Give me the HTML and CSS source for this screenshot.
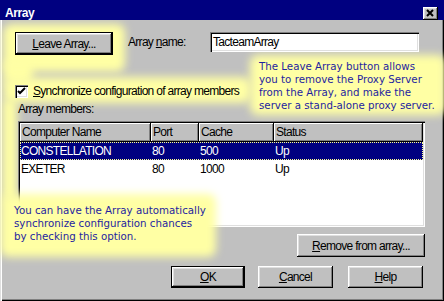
FILE: index.html
```html
<!DOCTYPE html>
<html>
<head>
<meta charset="utf-8">
<title>Array</title>
<link rel="stylesheet" href="styles.css">
</head>
<body>
<div class="window">
  <div class="glow g1"></div>
  <div class="glow g1b"></div>
  <div class="glow g2"></div>
  <div class="glow g4"></div>
  <div class="glow g6"></div>

  <div class="titlebar">
    <span class="title">Array</span>
    <span class="close"><svg width="15" height="13" viewBox="0 0 15 13"><path d="M4 3 L10 9 M10 3 L4 9" stroke="#000" stroke-width="2" fill="none"/></svg></span>
  </div>

  <div class="body">
    <div class="row1">
      <button class="btn default leave"><u>L</u>eave Array...</button>
      <span class="name-label">Array <u>n</u>ame:</span>
      <div class="input">TacteamArray</div>
    </div>

    <div class="check-row">
      <span class="checkbox"><svg width="9" height="9" viewBox="0 0 9 9"><path d="M1 4 L3 6 L8 1" stroke="#000" stroke-width="2" fill="none"/></svg></span>
      <span class="check-label"><u>S</u>ynchronize configuration of array members</span>
    </div>

    <div class="members-label">Array members:</div>

    <div class="list">
      <div class="lrow header">
        <div class="cell c1">Computer Name</div>
        <div class="cell c2">Port</div>
        <div class="cell c3">Cache</div>
        <div class="cell c4">Status</div>
      </div>
      <div class="lrow item selected">
        <div class="cell c1">CONSTELLATION</div>
        <div class="cell c2">80</div>
        <div class="cell c3">500</div>
        <div class="cell c4">Up</div>
      </div>
      <div class="lrow item">
        <div class="cell c1">EXETER</div>
        <div class="cell c2">80</div>
        <div class="cell c3">1000</div>
        <div class="cell c4">Up</div>
      </div>
    </div>

    <div class="remove-row">
      <button class="btn remove"><u>R</u>emove from array...</button>
    </div>

    <div class="btn-row">
      <button class="btn default ok"><u>O</u>K</button>
      <button class="btn cancel"><u>C</u>ancel</button>
      <button class="btn help"><u>H</u>elp</button>
    </div>
  </div>

  <div class="callout c-top">The Leave Array button allows<br>you to remove the Proxy Server<br>from the Array, and make the<br>server a stand-alone proxy server.</div>

  <div class="glow g5"></div>
  <div class="callout c-bottom">You can have the Array automatically<br>synchronize configuration chances<br>by checking this option.</div>
</div>
</body>
</html>
```

FILE: styles.css
```css
html, body {
  margin: 0;
  padding: 0;
  background: #c0c0c0;
}

.window {
  position: relative;
  width: 444px;
  height: 301px;
  box-sizing: border-box;
  background: #c0c0c0;
  box-shadow: inset 1px 1px #dfdfdf, inset 2px 2px #fff, inset -1px -1px #000, inset -2px -2px #808080;
  overflow: hidden;
  font-family: "Liberation Sans", Arial, sans-serif;
  font-size: 12px;
  letter-spacing: -0.7px;
  color: #000;
}

.titlebar {
  position: relative;
  z-index: 1;
  height: 20px;
  box-sizing: border-box;
  padding: 5px 6px 0 5px;
  background: #000080;
  color: #fff;
  display: flex;
  align-items: center;
  justify-content: space-between;
}

.title {
  font-weight: bold;
  font-size: 12px;
  letter-spacing: -0.4px;
}

.close {
  width: 15px;
  height: 13px;
  margin-top: 1px;
  background: #c0c0c0;
  box-shadow: inset -1px -1px #000, inset 1px 1px #fff, inset -2px -2px #808080, inset 2px 2px #dfdfdf;
  display: flex;
}

.body {
  position: relative;
  z-index: 1;
  padding: 12px 19px 0 15px;
}

.btn {
  font: inherit;
  letter-spacing: inherit;
  color: #000;
  margin: 0;
  padding: 0;
  border: none;
  background: #c0c0c0;
  box-shadow: inset -1px -1px #000, inset 1px 1px #fff, inset -2px -2px #808080, inset 2px 2px #dfdfdf;
  text-align: center;
  box-sizing: border-box;
}

.btn.default {
  border: 1px solid #000;
}

.row1 {
  display: flex;
  align-items: flex-start;
  height: 23px;
}

.leave {
  width: 98px;
  height: 23px;
}

.name-label {
  width: 82px;
  margin-left: 15px;
  line-height: 21px;
}

.input {
  width: 209px;
  height: 20px;
  box-sizing: border-box;
  padding: 2px 3px;
  line-height: 16px;
  background: #fff;
  box-shadow: inset 1px 1px #808080, inset 2px 2px #000, inset -1px -1px #fff, inset -2px -2px #dfdfdf;
}

.check-row {
  display: flex;
  align-items: center;
  height: 13px;
  margin-top: 30px;
}

.checkbox {
  width: 13px;
  height: 13px;
  box-sizing: border-box;
  padding: 2px;
  background: #fff;
  box-shadow: inset 1px 1px #808080, inset 2px 2px #000, inset -1px -1px #fff, inset -2px -2px #dfdfdf;
  display: flex;
}

.check-label {
  margin-left: 5px;
  line-height: 13px;
}

.members-label {
  margin: 5px 0 0 3px;
  line-height: 13px;
}

.list {
  margin: 5px 0 0 3px;
  width: 407px;
  height: 106px;
  box-sizing: border-box;
  padding: 2px;
  background: #fff;
  box-shadow: inset 1px 1px #808080, inset 2px 2px #000, inset -1px -1px #fff, inset -2px -2px #dfdfdf;
}

.lrow {
  display: flex;
}

.cell {
  box-sizing: border-box;
  padding-left: 2px;
  white-space: nowrap;
}

.c1 { width: 131px; }
.c2 { width: 48px; }
.c3 { width: 75px; }
.c4 { flex: 1; }

.header .cell {
  height: 19px;
  line-height: 18px;
  background: #c0c0c0;
  box-shadow: inset -1px -1px #000, inset 1px 1px #fff, inset -2px -2px #808080;
}

.item {
  height: 18px;
  line-height: 18px;
}

.item .cell {
  padding-left: 1px;
}

.item.selected {
  background: #000080;
  color: #fff;
  outline: 1px dotted #ffff90;
  outline-offset: -1px;
}

.remove-row {
  display: flex;
  justify-content: flex-end;
  margin-top: 7px;
}

.remove {
  width: 128px;
  height: 23px;
}

.btn-row {
  display: flex;
  margin-top: 9px;
  padding-left: 156px;
}

.ok {
  width: 74px;
  height: 22px;
}

.cancel {
  width: 75px;
  height: 22px;
  margin-left: 13px;
}

.help {
  width: 75px;
  height: 22px;
  margin-left: 15px;
}

.glow {
  position: absolute;
  z-index: 0;
  background: #ffffa4;
  border-radius: 8px;
  filter: blur(4px);
}

.g1 { left: 3px; top: 24px; width: 122px; height: 48px; }
.g1b { left: 3px; top: 60px; width: 30px; height: 24px; }
.g2 { left: 3px; top: 77px; width: 248px; height: 26px; }
.g4 { left: 2px; top: 98px; width: 15px; height: 104px; }
.g6 { left: 250px; top: 55px; width: 196px; height: 60px; }
.g5 { left: 0; top: 194px; width: 216px; height: 63px; z-index: 2; }

.callout {
  position: absolute;
  z-index: 3;
  font-family: "DejaVu Sans", Verdana, sans-serif;
  font-size: 10.25px;
  line-height: 13px;
  letter-spacing: 0;
  color: #1e1ea0;
  white-space: nowrap;
}

.c-top { left: 259px; top: 60px; }
.c-bottom { left: 14px; top: 204px; }
```
